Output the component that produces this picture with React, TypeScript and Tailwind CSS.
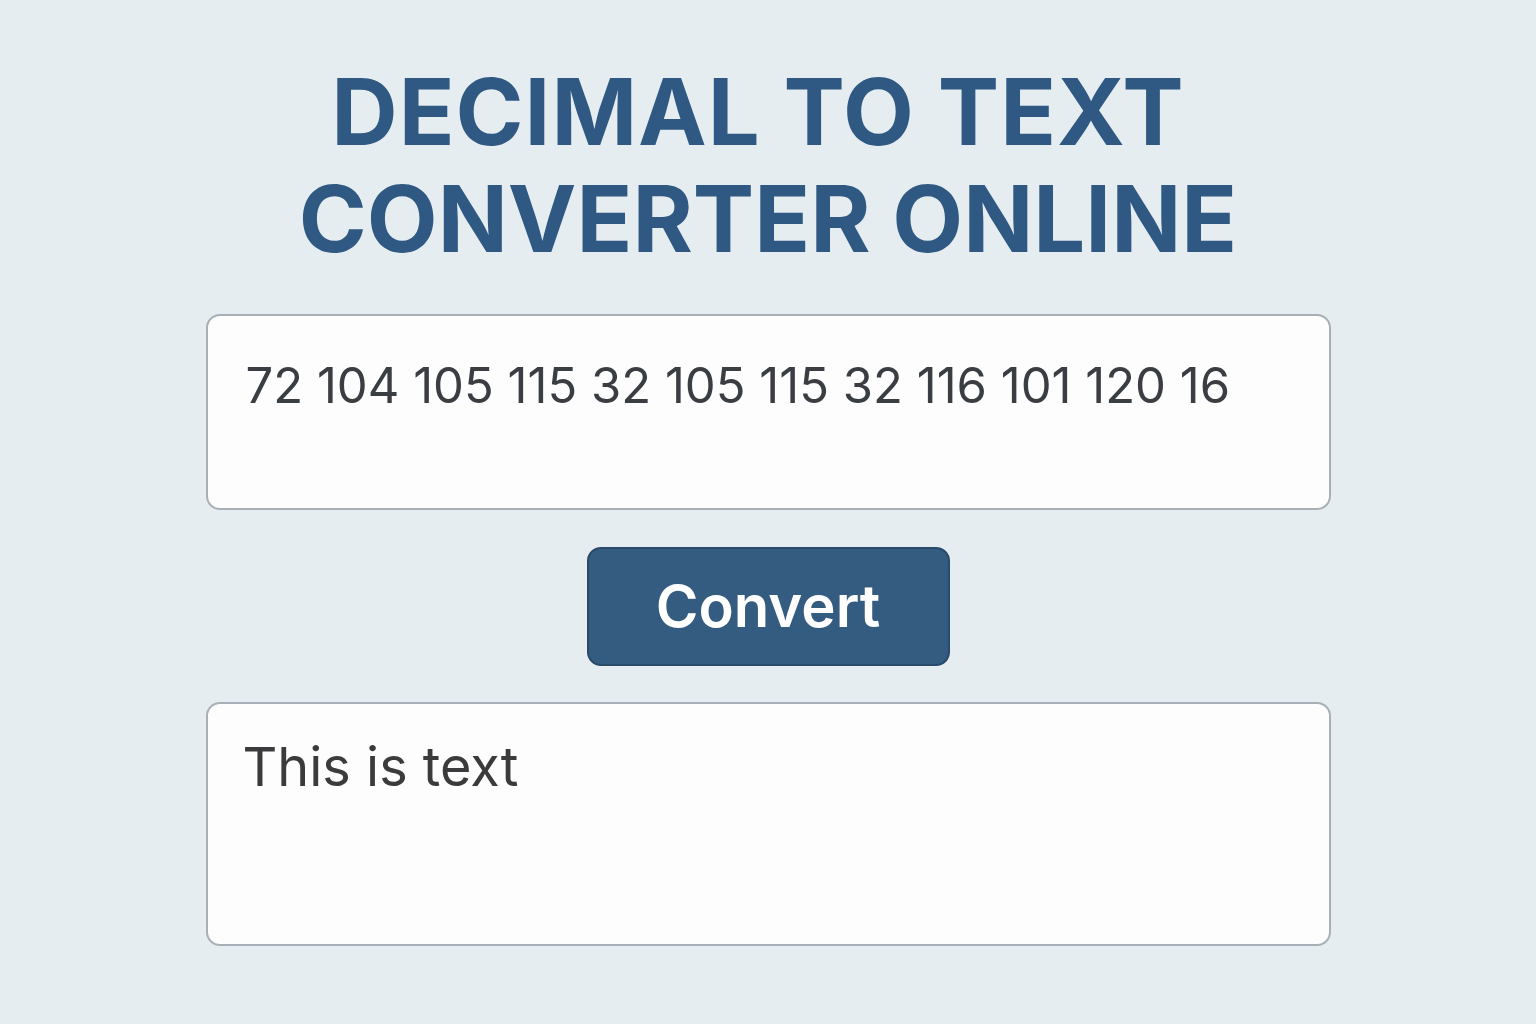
import React from "react"

const SAMPLE_INPUT = "72 104 105 115 32 105 115 32 116 101 120 16"
const SAMPLE_OUTPUT = "This is text"

export default function App() {
  return (
    <div
      className="min-h-screen w-full bg-[#e6edf0] flex flex-col items-center"
      style={{ fontFamily: "Inter, 'Noto Sans', sans-serif" }}
    >
      <h1 className="mt-[58px] text-center font-bold uppercase text-[#2f5982] text-[92px] leading-[107px]">
        <span className="block tracking-[1px] pr-[20px]">Decimal to Text</span>
        <span className="block">Converter Online</span>
      </h1>

      <div className="mt-[42px] w-[1125px] h-[196px] rounded-[14px] border-2 border-[#a8b0b7] bg-[#fdfdfd] px-[38px] pt-[40px]">
        <p className="text-[49px] leading-[60px] text-[#3a3d42]">{SAMPLE_INPUT}</p>
      </div>

      <button className="mt-[37px] w-[363px] h-[119px] rounded-[14px] border-2 border-[#2a4a69] bg-[#345b80] text-white text-[58px] font-semibold">
        Convert
      </button>

      <div className="mt-[36px] w-[1125px] h-[244px] rounded-[14px] border-2 border-[#a8b0b7] bg-[#fdfdfd] px-[35px] pt-[30px]">
        <p className="text-[54px] leading-[66px] text-[#3b3b3d]">{SAMPLE_OUTPUT}</p>
      </div>
    </div>
  )
}
